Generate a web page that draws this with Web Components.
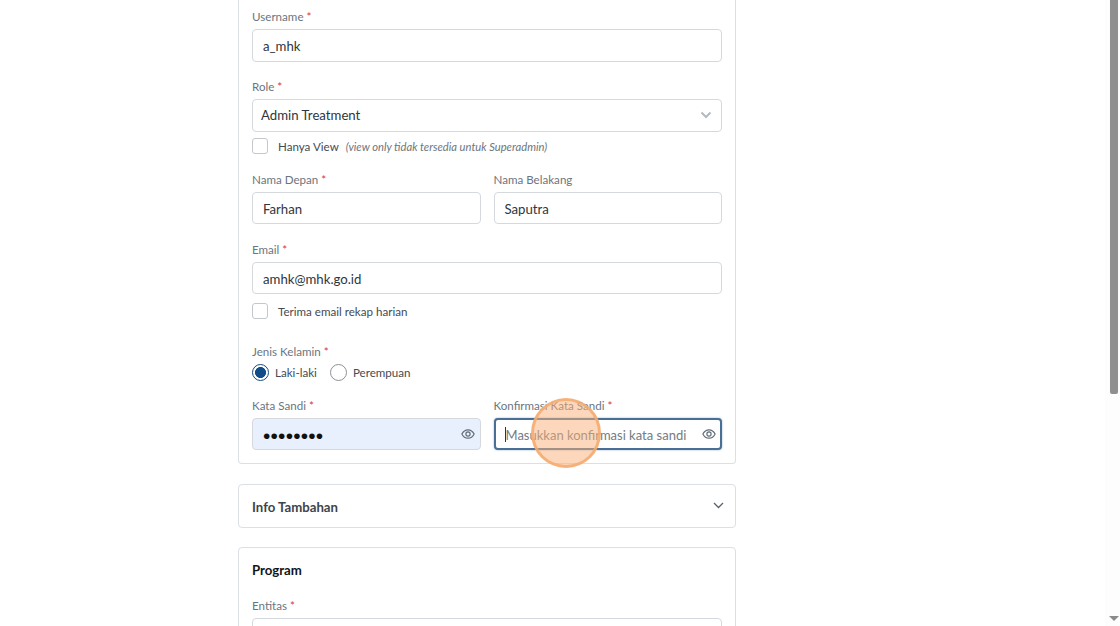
<!DOCTYPE html>
<html lang="en">
<head>
  <meta charset="UTF-8">
  <title>Tambah User</title>
  <style>
    html, body { margin: 0; height: 626px; overflow: hidden; background: #fff; font-family: Lato, "Open Sans", sans-serif; }
  </style>
</head>
<body>
  <app-page>
    <form-card style="margin-top:-10px;padding-top:20px;padding-bottom:13px;border-top:0">
      <form-field label="Username" required value="a_mhk"></form-field>
      <select-field label="Role" required value="Admin Treatment" style="margin-top:18px"></select-field>
      <check-row label="Hanya View" note="(view only tidak tersedia untuk Superadmin)" style="margin-top:6px"></check-row>
      <field-row style="margin-top:19px">
        <form-field label="Nama Depan" required value="Farhan" compact></form-field>
        <form-field label="Nama Belakang" value="Saputra" compact></form-field>
      </field-row>
      <form-field label="Email" required value="amhk@mhk.go.id" compact style="margin-top:19px"></form-field>
      <check-row label="Terima email rekap harian" style="margin-top:9px"></check-row>
      <radio-group label="Jenis Kelamin" style="margin-top:26px"></radio-group>
      <field-row style="margin-top:18px">
        <form-field label="Kata Sandi" required value="••••••••" type="password" filled eye compact></form-field>
        <form-field label="Konfirmasi Kata Sandi" required placeholder="Masukkan konfirmasi kata sandi" focused eye compact></form-field>
      </field-row>
    </form-card>
    <info-accordion title="Info Tambahan" style="margin-top:20px"></info-accordion>
    <form-card style="margin-top:19px;padding-top:12px;height:120px">
      <card-title>Program</card-title>
      <form-field label="Entitas" required compact style="margin-top:19px"></form-field>
    </form-card>
  </app-page>
  <script>
    const star = '<span style="color:#d9383a"> *</span>'

    class AppPage extends HTMLElement {
      constructor () {
        super()
        this.attachShadow({mode: 'open'}).innerHTML = `
          <style>
            :host { display: flex; height: 626px; overflow: hidden; position: relative; }
            main { flex: 1; padding-left: 238px; }
            .col { width: 498px; }
            .bar { width: 15px; background: #fdfdfd; display: flex; flex-direction: column; align-items: center; position: relative; }
            .thumb { width: 8px; height: 394px; background: #8f8f8f; margin-left: 3px; border-radius: 0 0 2px 2px; }
            .arrow { margin-top: auto; margin-bottom: 5px; margin-left: 3px; width: 0; height: 0; border: 5px solid transparent; border-top: 5px solid #8a8a8a; border-bottom: 0; }
            .cursor { position: absolute; left: 531px; top: 398px; width: 70px; height: 70px; box-sizing: border-box; border-radius: 50%; background: rgba(250,175,120,.5); border: 3px solid rgba(245,170,110,.85); }
          </style>
          <main><div class="col"><slot></slot></div></main>
          <div class="bar"><div class="thumb"></div><div class="arrow"></div></div>
          <div class="cursor"></div>`
      }
    }

    class FormCard extends HTMLElement {
      constructor () {
        super()
        this.attachShadow({mode: 'open'}).innerHTML = `
          <style>
            :host { display: block; box-sizing: border-box; background: #fff; border: 1px solid #dcdfe3; border-radius: 4px; padding: 14px 13px; }
          </style>
          <slot></slot>`
      }
    }

    class CardTitle extends HTMLElement {
      constructor () {
        super()
        this.attachShadow({mode: 'open'}).innerHTML = `
          <style>
            :host { display: block; font: 700 13.200px/20px Lato, sans-serif; color: #111518; }
          </style>
          <slot></slot>`
      }
    }

    class FieldRow extends HTMLElement {
      constructor () {
        super()
        this.attachShadow({mode: 'open'}).innerHTML = `
          <style>
            :host { display: grid; grid-template-columns: 1fr 1fr; column-gap: 13px; }
          </style>
          <slot></slot>`
      }
    }

    const eyeIcon = `<svg width="14" height="14" viewBox="0 0 24 24" fill="none" stroke="#5f6b76" stroke-width="2"><path d="M1.500 12C4 7 7.600 4.800 12 4.800S20 7 22.500 12C20 17 16.400 19.200 12 19.200S4 17 1.500 12Z"/><circle cx="12" cy="12" r="3.600"/></svg>`

    class FormField extends HTMLElement {
      connectedCallback () {
        const a = n => this.getAttribute(n)
        const has = n => this.hasAttribute(n)
        const pw = a('type') === 'password'
        const inner = has('focused')
          ? `<span class="caret"></span><span class="ph">${a('placeholder')}</span>`
          : `<span class="${pw ? 'dots' : 'val'}">${a('value') || ''}</span>`
        this.attachShadow({mode: 'open'}).innerHTML = `
          <style>
            :host { display: block; min-width: 0; font-family: Lato, sans-serif; }
            label { display: block; font-size: 11.600px; line-height: 14px; color: #6c757d; margin-bottom: 5px; }
            .box { height: ${has('compact') ? 32 : 33}px; box-sizing: border-box; display: flex; align-items: center; padding: 0 5px 0 10px; border: 1px solid #d5d9dd; border-radius: 4px; background: #fff; font-size: 13.200px; color: #2f363c; }
            .compact .val, .compact .ph, .compact .dots { margin-top: 2px; }
            .filled { background: #e8f0fe; }
            .focused { border: 2px solid #4a6f94; padding: 0 4px 0 9px; box-shadow: 0 0 2px rgba(40,90,140,.5); }
            .val { flex: 1; }
            .dots { flex: 1; color: #111; font: 400 21px/1 "Liberation Sans", sans-serif; letter-spacing: .2px; }
            .ph { flex: 1; color: #737b83; white-space: nowrap; font-size: 13px; }
            .caret { width: 1px; height: 15px; background: #333; }
            svg { flex: none; }
          </style>
          <label>${a('label')}${has('required') ? star : ''}</label>
          <div class="box ${has('compact') ? 'compact' : ''} ${has('filled') ? 'filled' : ''} ${has('focused') ? 'focused' : ''}">${inner}${has('eye') ? eyeIcon : ''}</div>`
      }
    }

    class SelectField extends HTMLElement {
      connectedCallback () {
        const a = n => this.getAttribute(n)
        this.attachShadow({mode: 'open'}).innerHTML = `
          <style>
            :host { display: block; font-family: Lato, sans-serif; }
            label { display: block; font-size: 11.600px; line-height: 14px; color: #6c757d; margin-bottom: 5px; }
            .box { height: 33px; box-sizing: border-box; display: flex; align-items: center; justify-content: space-between; padding: 0 9px 1px 8px; border: 1px solid #d5d9dd; border-radius: 4px; font-size: 13.200px; color: #2f363c; }
          </style>
          <label>${a('label')}${this.hasAttribute('required') ? star : ''}</label>
          <div class="box"><span>${a('value')}</span>
            <svg width="12" height="8" viewBox="0 0 12 8" fill="none" stroke="#b5bac0" stroke-width="2"><path d="M1.500 1.500 6 6l4.500-4.500"/></svg>
          </div>`
      }
    }

    class CheckRow extends HTMLElement {
      connectedCallback () {
        const a = n => this.getAttribute(n)
        this.attachShadow({mode: 'open'}).innerHTML = `
          <style>
            :host { display: flex; align-items: center; height: 16px; font-family: Lato, sans-serif; font-size: 11.600px; color: #444b52; }
            .box { width: 16px; height: 16px; box-sizing: border-box; border: 1.500px solid #c4c8cc; border-radius: 3px; margin-right: 10px; }
            em { color: #6e757c; margin-left: 7px; font-size: 11.200px; }
          </style>
          <span class="box"></span><span>${a('label')}</span>${a('note') ? `<em>${a('note')}</em>` : ''}`
      }
    }

    class RadioGroup extends HTMLElement {
      connectedCallback () {
        this.attachShadow({mode: 'open'}).innerHTML = `
          <style>
            :host { display: block; font-family: Lato, sans-serif; }
            label { display: block; font-size: 11.600px; line-height: 14px; color: #6c757d; margin-bottom: 5px; }
            .row { display: flex; align-items: center; height: 17px; font-size: 11.600px; color: #444b52; }
            .dot { width: 17px; height: 17px; box-sizing: border-box; border-radius: 50%; border: 1.500px solid #8b9197; margin-right: 6px; flex: none; }
            .on { border-color: #0f4c8a; background: radial-gradient(circle, #0f4c8a 0 5.200px, #fff 5.800px); }
            .second { margin-left: 13px; }
          </style>
          <label>${this.getAttribute('label')}${star}</label>
          <div class="row"><span class="dot on"></span><span>Laki-laki</span><span class="dot second"></span><span>Perempuan</span></div>`
      }
    }

    class InfoAccordion extends HTMLElement {
      connectedCallback () {
        this.attachShadow({mode: 'open'}).innerHTML = `
          <style>
            :host { display: flex; align-items: center; justify-content: space-between; box-sizing: border-box; height: 44px; padding: 2px 11px 0 13px; border: 1px solid #dcdfe3; border-radius: 4px; font: 700 13.200px Lato, sans-serif; color: #3c444b; }
            svg { margin-top: -4px; }
          </style>
          <span>${this.getAttribute('title')}</span>
          <svg width="11" height="7" viewBox="0 0 11 7" fill="none" stroke="#59626a" stroke-width="1.300"><path d="M1 1l4.500 4.500L10 1"/></svg>`
      }
    }

    customElements.define('app-page', AppPage)
    customElements.define('form-card', FormCard)
    customElements.define('card-title', CardTitle)
    customElements.define('field-row', FieldRow)
    customElements.define('form-field', FormField)
    customElements.define('select-field', SelectField)
    customElements.define('check-row', CheckRow)
    customElements.define('radio-group', RadioGroup)
    customElements.define('info-accordion', InfoAccordion)
  </script>
</body>
</html>
